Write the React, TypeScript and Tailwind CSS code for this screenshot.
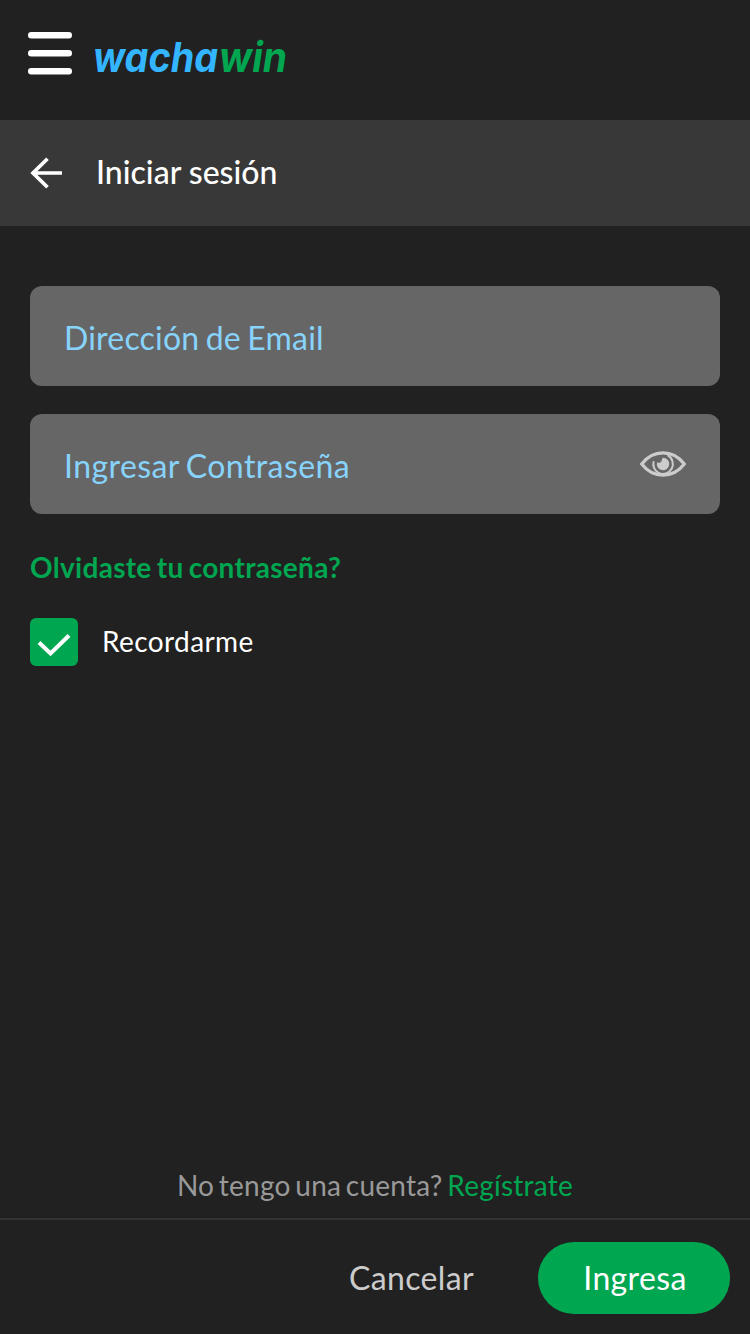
import { useState } from "react";

function Logo() {
  return (
    <div
      role="img"
      aria-label="wachawin"
      className="flex h-[52px] items-center font-['Inter',sans-serif] text-[41px] leading-[52px] font-bold whitespace-pre italic"
    >
      <svg className="block h-[52px] w-[196px] overflow-visible" viewBox="0 0 196 52">
        <text x="1" y="39.8" textLength="125" lengthAdjust="spacingAndGlyphs" fill="#33b5ff">
          wacha
        </text>
        <text x="127" y="39.8" textLength="68" lengthAdjust="spacingAndGlyphs" fill="#00a650">
          win
        </text>
      </svg>
    </div>
  );
}

function MenuIcon() {
  return (
    <svg className="block h-[43px] w-11" viewBox="0 0 44 43" fill="white">
      <rect width="44" height="6.500" rx="3.200" />
      <rect y="18" width="44" height="6.500" rx="3.200" />
      <rect y="36" width="44" height="6.500" rx="3.200" />
    </svg>
  );
}

function EyeIcon() {
  return (
    <svg className="block h-[28px] w-[48px]" viewBox="0 0 48 28" fill="none" stroke="#cccccc">
      <path d="M2.700 14C8.500 6.500 15.500 2.900 24 2.900S39.500 6.500 45.300 14C39.500 21.500 32.500 25.100 24 25.100S8.500 21.500 2.700 14Z" strokeWidth="3.200" />
      <path d="M28.500 5.200a9.800 9.800 0 0 1-9 17.600a9.800 9.800 0 0 1-4.800-11.500" strokeWidth="2" />
      <path d="M24 7.800a6.200 6.200 0 1 1-5.900 4.400c1.200.900 3.200.800 4-.200 1-1.100.200-2.700 1.900-4.200Z" fill="#cccccc" stroke="none" />
    </svg>
  );
}

export default function App() {
  const [email, setEmail] = useState("");
  const [password, setPassword] = useState("");
  const [visible, setVisible] = useState(false);
  const [remember, setRemember] = useState(true);

  return (
    <div className="flex h-[1334px] w-[750px] flex-col overflow-hidden bg-[#212121] font-['Lato',sans-serif] text-white">
      <header className="flex h-[120px] items-start pl-7">
        <button aria-label="Menú" className="mt-8">
          <MenuIcon />
        </button>
        <div className="mt-8 ml-5">
          <Logo />
        </div>
      </header>

      <div className="flex h-[106px] items-center bg-[#383838] pl-[30px]">
        <button aria-label="Volver">
          <svg className="block size-8" viewBox="0 0 32 32" fill="none" stroke="white" strokeWidth="3.700">
            <path d="M17.500 1.700 3 16l14.500 14.300M3 16h29" />
          </svg>
        </button>
        <h1 className="mb-0.5 ml-[34px] text-[32px] leading-10 font-medium">Iniciar sesión</h1>
      </div>

      <form className="flex flex-1 flex-col px-[30px] pt-[60px]" onSubmit={(e) => e.preventDefault()}>
        <div className="flex h-[100px] items-center rounded-xl bg-[#666666] px-[34px]">
          <input
            className="h-12 w-full bg-transparent pt-1 text-[32px] tracking-[0.200px] text-[#88d3fb] outline-none [word-spacing:-2px] placeholder:text-[#88d3fb]"
            placeholder="Dirección de Email"
            value={email}
            onChange={(e) => setEmail(e.target.value)}
          />
        </div>
        <div className="mt-7 flex h-[100px] items-center rounded-xl bg-[#666666] pr-[33px] pl-[34px]">
          <input
            className="h-12 min-w-0 flex-1 bg-transparent pt-1 text-[32px] tracking-[0.420px] text-[#88d3fb] outline-none [word-spacing:-2px] placeholder:text-[#88d3fb]"
            placeholder="Ingresar Contraseña"
            type={visible ? "text" : "password"}
            value={password}
            onChange={(e) => setPassword(e.target.value)}
          />
          <button type="button" aria-label="Mostrar contraseña" onClick={() => setVisible(!visible)}>
            <EyeIcon />
          </button>
        </div>
        <a href="#" className="mt-[35px] self-start text-[28px] leading-9 font-bold tracking-[0.300px] text-[#00a650] [word-spacing:-2px]">
          Olvidaste tu contraseña?
        </a>
        <button type="button" className="mt-[33px] flex h-12 items-center self-start" onClick={() => setRemember(!remember)}>
          <span className="flex size-12 items-center justify-center rounded-md bg-[#00a650]">
            {remember && (
              <svg className="block size-12" viewBox="0 0 48 48" fill="none" stroke="white" strokeWidth="4">
                <path d="M9 24.500 20.500 35.500 39 17.500" />
              </svg>
            )}
          </span>
          <span className="mb-0.5 ml-6 text-[28px] leading-9 tracking-[0.400px]">Recordarme</span>
        </button>
      </form>

      <p className="mb-[15px] text-center text-[28px] leading-9 tracking-[0.250px] text-[#999999] [word-spacing:-2.800px]">
        No tengo una cuenta?{" "}
        <a href="#" className="text-[#00a650]">Regístrate</a>
      </p>
      <footer className="flex h-[116px] items-center justify-end border-t-2 border-[#333333] pt-0.5 pr-5 text-[32px] tracking-[0.350px]">
        <button className="mr-[64px] text-[#cccccc]">Cancelar</button>
        <button className="h-[72px] w-[192px] rounded-full bg-[#00a650] pl-0.5 text-white">Ingresa</button>
      </footer>
    </div>
  );
}
